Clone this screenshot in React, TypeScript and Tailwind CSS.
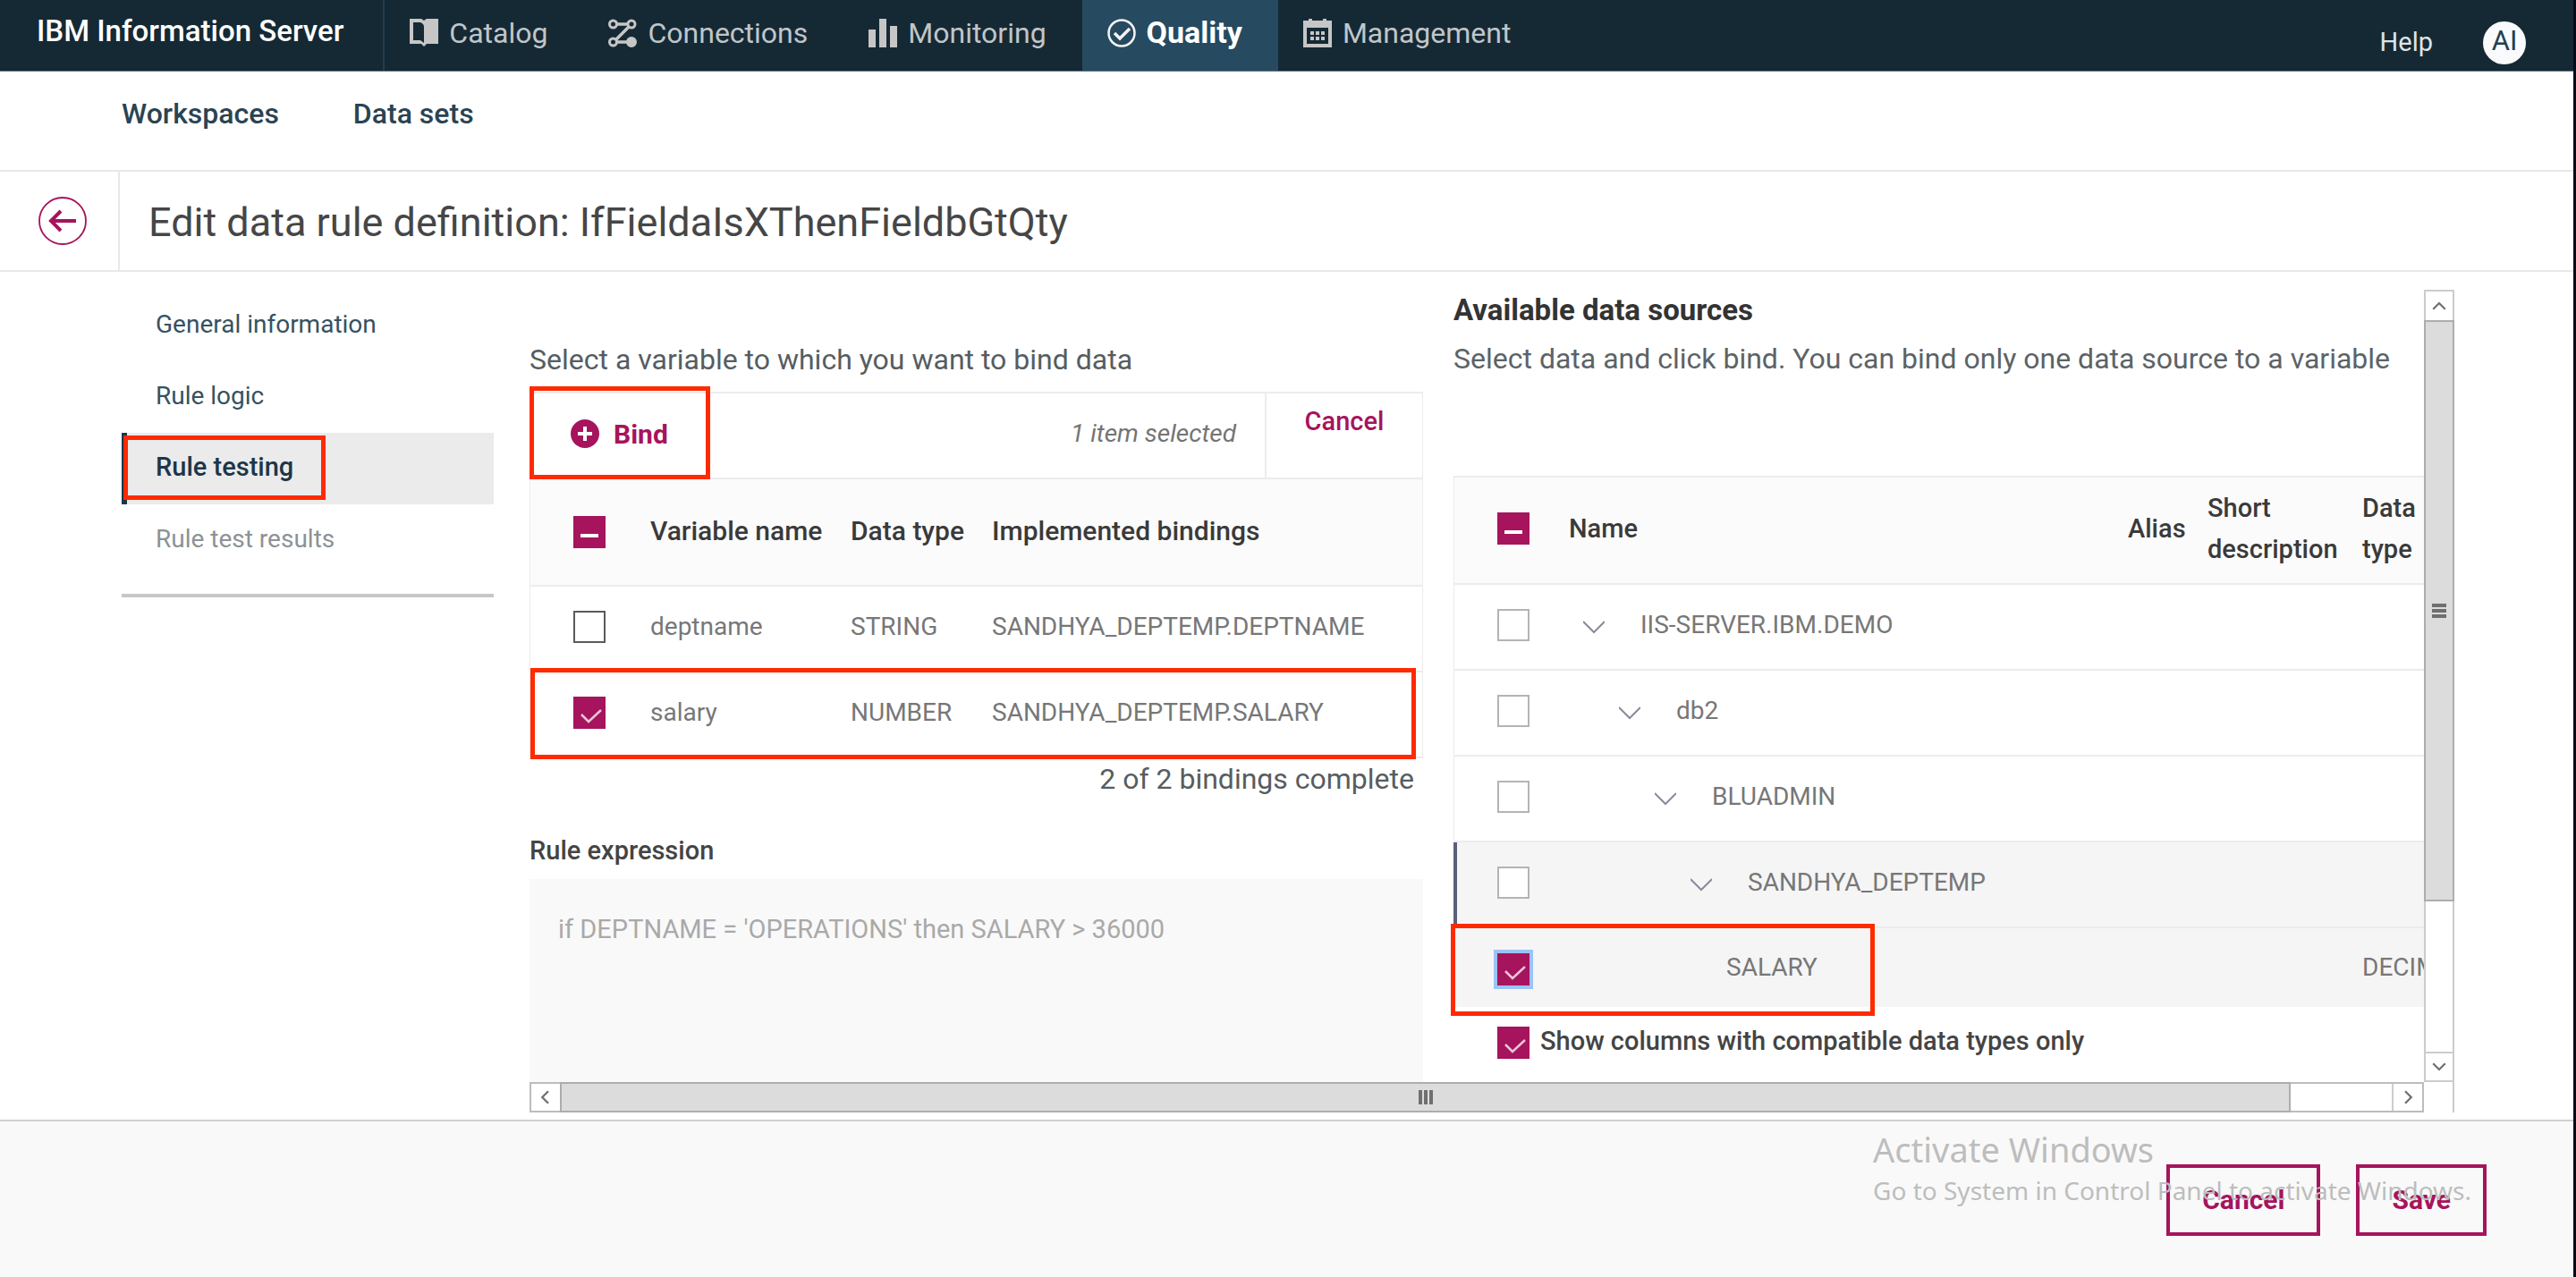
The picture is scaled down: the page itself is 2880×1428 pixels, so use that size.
import type { ReactNode } from "react";

function CatalogIcon() {
  return (
    <svg viewBox="0 0 32 32" className="size-8 shrink-0" aria-hidden="true">
      <path d="M0 0h13l3 2 3-2h13v28H19l-3 3-3-3H0Z" fill="#c6c6c6" />
      <path d="M4 4h8c3 1 4 3 4 5v18l-4-3H4Z" fill="#152935" />
    </svg>
  );
}

function ConnectionsIcon() {
  return (
    <svg viewBox="0 0 32 32" className="size-8 shrink-0" fill="none" stroke="#c6c6c6" strokeWidth="3" aria-hidden="true">
      <circle cx="5.5" cy="6" r="4" />
      <circle cx="26" cy="6" r="4" />
      <circle cx="5.5" cy="26" r="4" />
      <circle cx="26" cy="26" r="4.5" fill="#c6c6c6" />
      <path d="M10 6h12M23 9 9 23M10 26h12" strokeWidth="3.5" />
    </svg>
  );
}

function MonitoringIcon() {
  return (
    <svg viewBox="0 0 32 32" className="size-8 shrink-0" fill="#c6c6c6" aria-hidden="true">
      <path d="M0 12h8v20H0ZM12 0h8v32h-8ZM24 8h8v24h-8Z" />
    </svg>
  );
}

function QualityIcon() {
  return (
    <svg viewBox="0 0 32 32" className="size-8 shrink-0" fill="none" stroke="#f4f4f4" aria-hidden="true">
      <circle cx="16" cy="16" r="14.5" strokeWidth="2.5" />
      <path d="m8 16 6 6 11-11" strokeWidth="3.5" />
    </svg>
  );
}

function ManagementIcon() {
  return (
    <svg viewBox="0 0 32 32" className="size-8 shrink-0" aria-hidden="true">
      <path d="M0 2h6V0h4v2h12V0h4v2h6v30H0Z" fill="#c6c6c6" />
      <path d="M4 10h24v18H4Z" fill="#152935" />
      <path d="M8 14h4v4H8Zm6 0h4v4h-4Zm6 0h4v4h-4ZM8 20h4v4H8Zm6 0h4v4h-4Zm6 0h4v4h-4Z" fill="#c6c6c6" />
    </svg>
  );
}

function NavItem({ icon, label, active = false }: { icon: ReactNode; label: string; active?: boolean }) {
  return (
    <a
      href="#"
      aria-current={active ? "page" : undefined}
      className={
        active
          ? "flex h-full items-center gap-3 bg-[#264a60] pr-10 pb-1.5 pl-7 text-[34px] font-bold text-white"
          : "flex h-full items-center gap-3 pr-10 pb-1.5 pl-7 text-[32px] text-[#c0c6c9]"
      }
    >
      {icon}
      {label}
    </a>
  );
}

type CheckState = "empty" | "checked" | "mixed";

function Checkbox({ state, label, muted = false, focused = false, id }: { state: CheckState; label?: string; muted?: boolean; focused?: boolean; id?: string }) {
  const look =
    state !== "empty"
      ? focused
        ? "bg-[#a6145d] ring-4 ring-[#9cc3f5]"
        : "bg-[#a6145d]"
      : muted
        ? "border-2 border-[#b4b4b4] bg-white"
        : "border-2 border-[#5a5a5a] bg-white";
  return (
    <span className="grid size-9 shrink-0">
      <input
        id={id}
        type="checkbox"
        aria-label={label}
        defaultChecked={state === "checked"}
        className={`col-start-1 row-start-1 size-9 appearance-none ${look}`}
      />
      {state === "checked" && (
        <svg viewBox="0 0 36 36" className="pointer-events-none col-start-1 row-start-1 size-9" fill="none" stroke="#ecc6da" strokeWidth="2.5" aria-hidden="true">
          <path d="m9 20 8 8 14-13" />
        </svg>
      )}
      {state === "mixed" && (
        <svg viewBox="0 0 36 36" className="pointer-events-none col-start-1 row-start-1 size-9" fill="#ffffff" aria-hidden="true">
          <path d="M8 20h20v4H8Z" />
        </svg>
      )}
    </span>
  );
}

function Chevron({ d, className }: { d: string; className: string }) {
  return (
    <svg viewBox="0 0 24 24" className={className} fill="none" stroke="currentColor" aria-hidden="true">
      <path d={d} />
    </svg>
  );
}

const steps = [
  { label: "General information", look: "text-[#36525f]" },
  { label: "Rule logic", look: "text-[#36525f]" },
  { label: "Rule testing", look: "" },
  { label: "Rule test results", look: "text-[#8c9296]" },
];

const variables: { name: string; type: string; binding: string; checked: boolean }[] = [
  { name: "deptname", type: "STRING", binding: "SANDHYA_DEPTEMP.DEPTNAME", checked: false },
  { name: "salary", type: "NUMBER", binding: "SANDHYA_DEPTEMP.SALARY", checked: true },
];

const treeRows = [
  { name: "IIS-SERVER.IBM.DEMO", indent: "pl-3" },
  { name: "db2", indent: "pl-13" },
  { name: "BLUADMIN", indent: "pl-23" },
  { name: "SANDHYA_DEPTEMP", indent: "pl-33" },
];

function VariablesPanel() {
  return (
    <section className="flex min-w-0 flex-[999] flex-col pt-[58px]">
      <p className="text-[32px] leading-10 text-[#565d61]">Select a variable to which you want to bind data</p>
      <div className="relative mt-4 flex h-[98px] border-x border-y-2 border-[#ececec]">
        <button type="button" className="flex items-center gap-4 pb-1 pl-[45px] text-[30px] font-bold text-[#a6145d]">
          <svg viewBox="0 0 32 32" className="size-8" aria-hidden="true">
            <circle cx="16" cy="16" r="16" fill="#a6145d" />
            <path d="M16 8v16M8 16h16" stroke="#ffffff" strokeWidth="4" />
          </svg>
          Bind
        </button>
        <p className="ml-auto flex items-center pr-8 pb-1 text-[28px] text-[#747474] italic">1 item selected</p>
        <button type="button" className="w-[176px] border-l-2 border-[#ececec] pb-8 text-[29px] leading-10 font-medium text-[#a6145d]">
          Cancel
        </button>
        <div className="pointer-events-none absolute -top-2 -left-px h-[104px] w-[202px] border-5 border-[#ff2a00]" />
      </div>
      <div className="relative">
        <table className="w-full table-fixed border-separate border-spacing-0 border-x border-[#ececec] text-left">
          <colgroup>
            <col className="w-[134px]" />
            <col className="w-[224px]" />
            <col className="w-[158px]" />
            <col />
          </colgroup>
          <thead>
            <tr className="h-[120px] bg-[#fbfbfb] text-[30px] whitespace-nowrap text-[#3a3a3a]">
              <th className="border-b-2 border-[#ececec] pl-12">
                <Checkbox state="mixed" label="Select all variables" />
              </th>
              <th className="border-b-2 border-[#ececec] pb-1 font-medium">Variable name</th>
              <th className="border-b-2 border-[#ececec] pb-1 font-medium">Data type</th>
              <th className="border-b-2 border-[#ececec] pb-1 font-medium">Implemented bindings</th>
            </tr>
          </thead>
          <tbody>
            {variables.map((v) => (
              <tr key={v.name} className="h-24 text-[28px] text-[#777777]">
                <td className="border-b-2 border-[#ececec] pb-1 pl-12">
                  <Checkbox state={v.checked ? "checked" : "empty"} label={v.name} />
                </td>
                <td className="border-b-2 border-[#ececec] pb-1">{v.name}</td>
                <td className="border-b-2 border-[#ececec] pb-1">{v.type}</td>
                <td className="border-b-2 border-[#ececec] pb-1">{v.binding}</td>
              </tr>
            ))}
          </tbody>
        </table>
        <div className="pointer-events-none absolute right-2 -bottom-px left-px h-[102px] border-5 border-[#ff2a00]" />
      </div>
      <p className="mt-[3px] pr-2.5 text-right text-[32px] leading-10 text-[#565d61]">2 of 2 bindings complete</p>
      <label htmlFor="rule-expression" className="mt-10 text-[29px] leading-10 font-medium text-[#444444]">
        Rule expression
      </label>
      <textarea
        id="rule-expression"
        readOnly
        defaultValue="if DEPTNAME = 'OPERATIONS' then SALARY > 36000"
        className="mt-3 w-full flex-1 resize-none bg-[#f9f9f9] px-8 pt-9 text-[29px] leading-10 text-[#a9a9a9] outline-none"
      />
    </section>
  );
}

function SourcesPanel() {
  return (
    <section className="-ml-1 min-w-0 flex-[1085] overflow-hidden pt-[3px] pl-1">
      <h2 className="text-[33px] leading-10 font-bold text-[#333333]">Available data sources</h2>
      <p className="mt-3.5 text-[32px] leading-10 whitespace-nowrap text-[#5c6367]">
        Select data and click bind. You can bind only one data source to a variable
      </p>
      <div className="relative mt-[111px]">
        <table className="w-[1144px] table-fixed border-separate border-spacing-0 text-left">
          <colgroup>
            <col className="w-[129px]" />
            <col className="w-[625px]" />
            <col className="w-[89px]" />
            <col className="w-[173px]" />
            <col className="w-[128px]" />
          </colgroup>
          <thead>
            <tr className="h-[122px] bg-[#fbfbfb] text-[29px] leading-[46px] text-[#3a3a3a]">
              <th className="border-y-2 border-l border-[#ececec] pb-1 pl-12">
                <Checkbox state="mixed" label="Select all data sources" />
              </th>
              <th className="border-y-2 border-[#ececec] pb-1 font-medium">Name</th>
              <th className="border-y-2 border-[#ececec] pb-1 font-medium">Alias</th>
              <th className="border-y-2 border-[#ececec] pb-1 font-medium">Short<br />description</th>
              <th className="border-y-2 border-[#ececec] pb-1 font-medium">Data<br />type</th>
            </tr>
          </thead>
          <tbody>
            {treeRows.map((r) => {
              const current = r.name === "SANDHYA_DEPTEMP";
              return (
                <tr key={r.name} className={current ? "h-24 bg-[#f5f5f5] text-[28px] text-[#777777]" : "h-24 text-[28px] text-[#777777]"}>
                  <td className={current ? "border-b-2 border-l-4 border-b-[#ececec] border-l-[#5a6078] pb-1 pl-[45px]" : "border-b-2 border-l border-[#ececec] pb-1 pl-12"}>
                    <Checkbox state="empty" muted label={r.name} />
                  </td>
                  <td className="border-b-2 border-[#ececec]">
                    <div className={`flex items-center gap-10 pb-1 ${r.indent}`}>
                      <button type="button" aria-label={`Collapse ${r.name}`} className="text-[#8a8c9c]">
                        <Chevron d="M0 6 12 18 24 6" className="mt-1 ml-1 size-6 stroke-2" />
                      </button>
                      {r.name}
                    </div>
                  </td>
                  <td colSpan={3} className="border-b-2 border-[#ececec]" />
                </tr>
              );
            })}
            <tr className="h-[88px] bg-[#f5f5f5] text-[28px] text-[#777777]">
              <td className="border-l border-[#ececec] pt-1 pl-12">
                <Checkbox state="checked" focused label="SALARY" />
              </td>
              <td className="pl-44">SALARY</td>
              <td />
              <td />
              <td>DECIMAL</td>
            </tr>
          </tbody>
        </table>
        <div className="pointer-events-none absolute -bottom-2.5 -left-[3px] h-[103px] w-[474px] border-5 border-[#ff2a00]" />
      </div>
      <div className="mt-[22px] mb-[26px] flex items-center gap-3 pl-[49px]">
        <Checkbox id="compatible-only" state="checked" />
        <label htmlFor="compatible-only" className="-mt-1 text-[29px] leading-9 font-medium text-[#444444]">
          Show columns with compatible data types only
        </label>
      </div>
    </section>
  );
}

function VerticalBar() {
  return (
    <div className="flex flex-col border-x-2 border-[#cccccc] text-[#707070]">
      <button type="button" aria-label="Scroll up" className="grid h-8.5 place-items-center border-t-2 border-[#cccccc]">
        <Chevron d="M3 17 12 8l9 9" className="size-4.5 stroke-3" />
      </button>
      <div className="-mx-0.5 grid flex-[649] place-items-center border-2 border-[#adadad] bg-[#dcdcdc]">
        <svg viewBox="0 0 16 16" className="size-4" fill="#6f6f6f" aria-hidden="true">
          <path d="M0 0h16v4H0ZM0 6h16v4H0ZM0 12h16v4H0Z" />
        </svg>
      </div>
      <div className="flex-[169]" />
      <button type="button" aria-label="Scroll down" className="grid h-8.5 place-items-center border-y-2 border-[#cccccc]">
        <Chevron d="M3 7l9 9 9-9" className="size-4.5 stroke-3" />
      </button>
    </div>
  );
}

function HorizontalBar() {
  return (
    <div className="flex h-8.5 border-2 border-[#bdbdbd] text-[#707070]">
      <button type="button" aria-label="Scroll left" className="grid w-8 place-items-center">
        <Chevron d="M16 3l-9 9 9 9" className="size-4.5 stroke-3" />
      </button>
      <div className="-my-0.5 grid flex-[1939] place-items-center border-2 border-[#adadad] bg-[#dcdcdc]">
        <svg viewBox="0 0 16 16" className="size-4" fill="#6f6f6f" aria-hidden="true">
          <path d="M0 0h4v16H0ZM6 0h4v16H6ZM12 0h4v16h-4Z" />
        </svg>
      </div>
      <div className="flex-[113]" />
      <button type="button" aria-label="Scroll right" className="grid w-8.5 place-items-center border-l-2 border-[#cccccc]">
        <Chevron d="M8 3l9 9-9 9" className="size-4.5 stroke-3" />
      </button>
    </div>
  );
}

export default function App() {
  return (
    <div className="flex min-h-screen flex-col border-r-3 border-[#050a18] bg-white font-['Roboto',sans-serif]">
      <header className="flex h-20 items-stretch border-b border-[#5f6e77] bg-[#152935]">
        <a href="#" className="flex items-center border-r-2 border-[#1f3f52] pr-11 pb-2.5 pl-[41px] text-[33px] font-medium text-white">
          IBM Information Server
        </a>
        <nav aria-label="Main" className="flex">
          <NavItem icon={<CatalogIcon />} label="Catalog" />
          <NavItem icon={<ConnectionsIcon />} label="Connections" />
          <NavItem icon={<MonitoringIcon />} label="Monitoring" />
          <NavItem icon={<QualityIcon />} label="Quality" active />
          <NavItem icon={<ManagementIcon />} label="Management" />
        </nav>
        <div className="ml-auto flex items-center gap-14 pt-4 pr-[53px]">
          <a href="#" className="text-[29px] text-[#dfe3e6]">Help</a>
          <button type="button" className="size-12 rounded-full bg-[#fafafc] pb-1 text-[31px] leading-none text-[#24404f]">AI</button>
        </div>
      </header>

      <nav aria-label="Quality" className="flex h-28 gap-[83px] border-b-2 border-[#e8e8e8] pt-[27px] pl-[136px] text-[32px] leading-10 font-medium text-[#2b4353]">
        <a href="#">Workspaces</a>
        <a href="#">Data sets</a>
      </nav>

      <div className="flex h-28 border-b-2 border-[#e8e8e8]">
        <div className="flex w-[134px] items-center border-r-2 border-[#e8e8e8] pl-[43px]">
          <button type="button" aria-label="Back" className="size-[54px]">
            <svg viewBox="0 0 54 54" className="size-[54px]" fill="none" stroke="#a6145d" aria-hidden="true">
              <circle cx="27" cy="27" r="26" strokeWidth="1.8" />
              <path d="M42 27H15M25 16 14 27l11 11" strokeWidth="4" />
            </svg>
          </button>
        </div>
        <h1 className="flex items-center pt-1 pl-8 text-[45px] text-[#464646]">Edit data rule definition: IfFieldaIsXThenFieldbGtQty</h1>
      </div>

      <main className="flex gap-10 pt-5 pr-[133px] pb-2 pl-[136px]">
        <nav aria-label="Steps" className="w-[416px] shrink-0 text-[28px]">
          <ul>
            {steps.map((s) =>
              s.label === "Rule testing" ? (
                <li key={s.label} className="relative">
                  <a href="#" aria-current="step" className="flex h-20 items-center border-l-6 border-[#1d3649] bg-[#ebebeb] pb-0.5 pl-8 text-[29px] font-medium text-[#1d3649]">
                    {s.label}
                  </a>
                  <div className="pointer-events-none absolute top-[3px] left-0.5 h-[72px] w-[226px] border-5 border-[#ff2a00]" />
                </li>
              ) : (
                <li key={s.label}>
                  <a href="#" className={`flex h-20 items-center pb-0.5 pl-[38px] ${s.look}`}>{s.label}</a>
                </li>
              ),
            )}
          </ul>
          <hr className="mt-5 border-t-4 border-[#c7c7c7]" />
        </nav>

        <div className="grid min-w-0 flex-1 grid-cols-[minmax(0,1fr)_34px]">
          <div className="flex gap-[34px]">
            <VariablesPanel />
            <SourcesPanel />
          </div>
          <VerticalBar />
          <HorizontalBar />
          <div className="border-r-2 border-[#cccccc]" />
        </div>
      </main>

      <footer className="relative flex flex-1 items-start justify-end gap-10 border-t-2 border-[#d0d0d0] bg-[#f9f9f9] pt-12 pr-[97px]">
        <button type="button" className="h-20 border-4 border-[#a6145d] px-9 pb-0.5 text-[30px] font-bold text-[#a6145d]">Cancel</button>
        <button type="button" className="h-20 border-4 border-[#a6145d] px-9 pb-0.5 text-[30px] font-bold text-[#a6145d]">Save</button>
        <aside className="pointer-events-none absolute top-2 right-[114px] font-['Noto_Sans',sans-serif] text-[28px] leading-[46px] text-[#bdbdbd]">
          <p className="text-[38px]">Activate Windows</p>
          <p>Go to System in Control Panel to activate Windows.</p>
        </aside>
      </footer>
    </div>
  );
}
